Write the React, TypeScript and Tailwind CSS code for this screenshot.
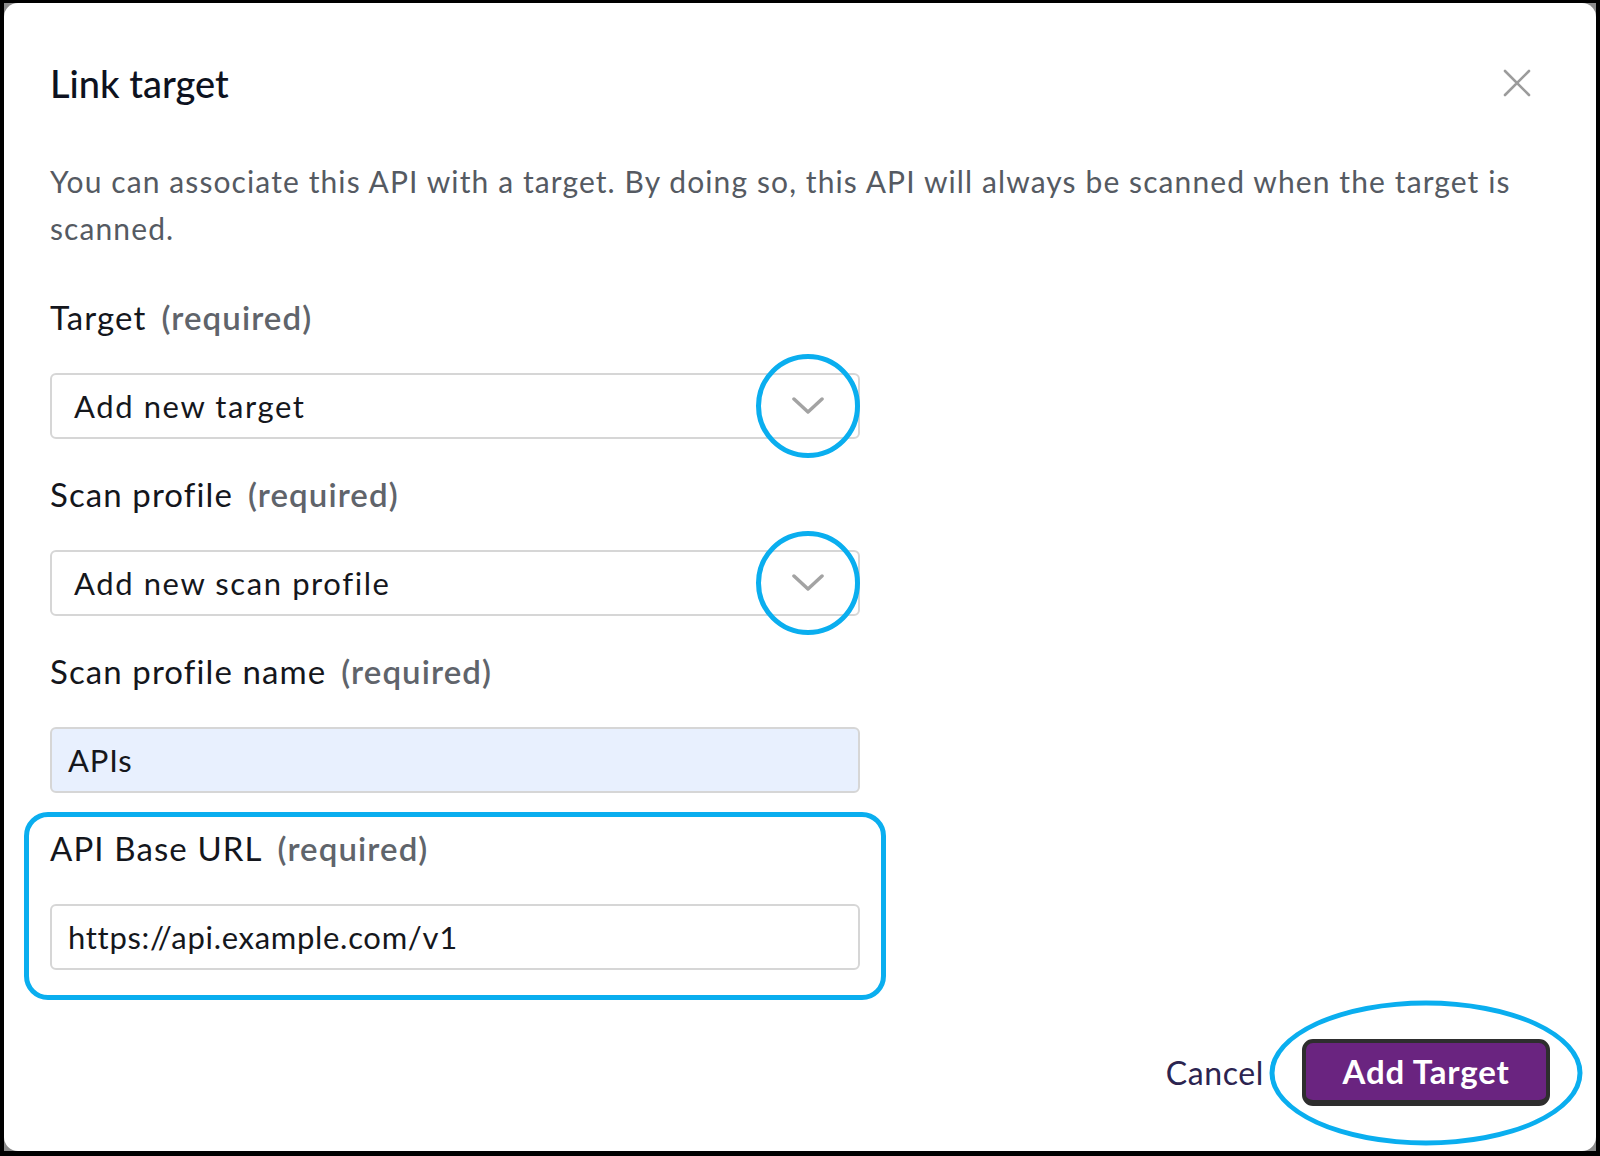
import React from "react";

function Label({ text }: { text: string }) {
  return (
    <div className="text-[33px] leading-[44px] tracking-[1.1px] text-[#14161c]">
      {text}
      <span className="ml-[15px] font-semibold text-[#60646b]">(required)</span>
    </div>
  );
}

function Chevron() {
  return (
    <svg width="32" height="18" viewBox="0 0 32 18" fill="none">
      <polyline
        points="2,2 16,15 30,2"
        stroke="#a3a3a3"
        strokeWidth="3.5"
        strokeLinecap="round"
        strokeLinejoin="round"
      />
    </svg>
  );
}

function SelectField({ label, value }: { label: string; value: string }) {
  return (
    <div>
      <Label text={label} />
      <div className="relative mt-[34px] flex h-[66px] items-center justify-between rounded-[6px] border-2 border-[#d6d6d6] bg-white pl-[22px] pr-[24px]">
        <span className="text-[31px] tracking-[1.6px] text-[#15171c]">{value}</span>
        <div className="relative mr-[10px] flex h-[18px] w-[32px] items-center justify-center">
          <Chevron />
          {/* annotation ring */}
          <div className="pointer-events-none absolute left-1/2 top-1/2 h-[104px] w-[104px] -translate-x-1/2 -translate-y-1/2 rounded-full border-[5px] border-[#0aaeef]" />
        </div>
      </div>
    </div>
  );
}

export default function App() {
  return (
    <div className="h-[1156px] w-[1600px] bg-black px-[4px] pb-[5px] pt-[3px] font-['Lato',sans-serif]">
      <div className="h-full w-full bg-[#8c8c8c]">
        <div className="relative h-full w-full overflow-hidden rounded-[14px] bg-white px-[46px] pt-[56px]">
          <div className="flex items-center justify-between">
            <h1 className="text-[38px] font-medium leading-[48px] text-[#0d1220]">Link target</h1>
            <button className="mr-[18px] text-[#9c9c9c]">
              <svg width="30" height="30" viewBox="0 0 30 30" fill="none">
                <path d="M3 3 L27 27 M27 3 L3 27" stroke="currentColor" strokeWidth="2.6" strokeLinecap="round" />
              </svg>
            </button>
          </div>

          <p className="mt-[51px] pr-[20px] text-[30px] leading-[47px] tracking-[1.1px] text-[#555a62]">
            You can associate this API with a target. By doing so, this API will always be scanned when the target is
            scanned.
          </p>

          <div className="mt-[43px] flex w-[810px] flex-col gap-[33px]">
            <SelectField label="Target" value="Add new target" />
            <SelectField label="Scan profile" value="Add new scan profile" />
            <div>
              <Label text="Scan profile name" />
              <div className="mt-[34px] flex h-[66px] items-center rounded-[6px] border-2 border-[#d6d6d6] bg-[#e8f0fe] px-[16px] text-[31px] tracking-[0.8px] text-[#15171c]">
                APIs
              </div>
            </div>
            <div className="relative">
              <Label text="API Base URL" />
              <div className="mt-[34px] flex h-[66px] items-center rounded-[6px] border-2 border-[#d6d6d6] bg-white px-[16px] text-[31px] tracking-[0.7px] text-[#15171c]">
                https://api.example.com/v1
              </div>
              {/* annotation box */}
              <div className="pointer-events-none absolute -bottom-[30px] -left-[26px] -right-[26px] -top-[14px] rounded-[24px] border-[5px] border-[#0aaeef]" />
            </div>
          </div>

          <div className="mt-[69px] flex items-center justify-end">
            <span className="text-[32px] tracking-[0.6px] text-[#2c2450]">Cancel</span>
            <div className="relative ml-[38px]">
              <button className="h-[67px] w-[248px] rounded-[11px] border-[4px] border-b-[6px] border-[#2e2e2e] bg-[#6a2480] text-[33px] font-bold tracking-[0.8px] text-white">
                Add Target
              </button>
              {/* annotation ellipse */}
              <div className="pointer-events-none absolute left-1/2 top-1/2 h-[145px] w-[313px] -translate-x-1/2 -translate-y-1/2 rounded-[50%] border-[5px] border-[#0aaeef]" />
            </div>
          </div>
        </div>
      </div>
    </div>
  );
}
